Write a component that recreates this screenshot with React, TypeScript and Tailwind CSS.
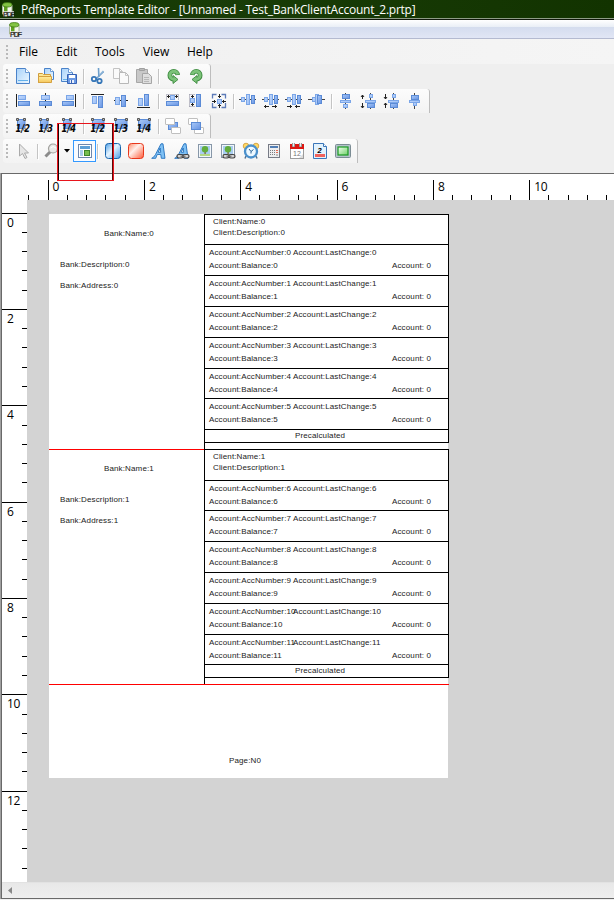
import React from "react";

const BLUE = "#5b8bd6";

function Icon({ children, x = "" }: { children: React.ReactNode; x?: string }) {
  return (
    <svg width="16" height="16" viewBox="0 0 16 16" className={"block shrink-0 overflow-visible " + x}>
      {children}
    </svg>
  );
}

function Box({ x, y, w, h, dark = false }: { x: number; y: number; w: number; h: number; dark?: boolean }) {
  return <rect x={x + 0.5} y={y + 0.5} width={w - 1} height={h - 1} fill={dark ? "url(#mid)" : "url(#pale)"} stroke={dark ? BLUE : "#7ba6e8"} />;
}

function Line({ d, c = "#222", w = 1 }: { d: string; c?: string; w?: number }) {
  return <path d={d} stroke={c} strokeWidth={w} fill="none" />;
}

function Defs() {
  return (
    <svg width="0" height="0" className="absolute">
      <defs>
        <linearGradient id="pale" x2="1" y2="1"><stop stopColor="#c3dafc" /><stop offset="1" stopColor="#9abdf5" /></linearGradient>
        <linearGradient id="mid" x2="1" y2="1"><stop stopColor="#a9c9f8" /><stop offset="1" stopColor="#6592e2" /></linearGradient>
        <linearGradient id="sheet" x2="1" y2="1"><stop stopColor="#a8d2fa" /><stop offset="1" stopColor="#eef8ff" /></linearGradient>
        <linearGradient id="blueBall" x2="1" y2="1"><stop stopColor="#4d9fe6" /><stop offset=".45" stopColor="#e6f4ff" /><stop offset="1" stopColor="#4a9ce8" /></linearGradient>
        <linearGradient id="redBall" x2="1" y2="1"><stop stopColor="#ff8a68" /><stop offset=".4" stopColor="#fff0ea" /><stop offset="1" stopColor="#ff5a38" /></linearGradient>
        <linearGradient id="greenBox" x2="1" y2="1"><stop stopColor="#f2fff0" /><stop offset="1" stopColor="#6fd068" /></linearGradient>
        <linearGradient id="folder" y2="1" x2="0"><stop stopColor="#ffefa0" /><stop offset="1" stopColor="#f5c65c" /></linearGradient>
      </defs>
    </svg>
  );
}

function Grip() {
  return (
    <div className="ml-[3px] mr-[7px] flex w-[2px] shrink-0 flex-col gap-[2px]">
      <i className="h-[2px] bg-[#b9b9b9]" />
      <i className="h-[2px] bg-[#b9b9b9]" />
      <i className="h-[2px] bg-[#b9b9b9]" />
      <i className="h-[2px] bg-[#b9b9b9]" />
    </div>
  );
}

function Sep() {
  return <i className="-mx-px h-[15px] w-px shrink-0 bg-[#c4c4c4] shadow-[1px_1px_0_#fff]" />;
}

function Bar({ w, children }: { w: string; children: React.ReactNode }) {
  return (
    <div className={"ml-[3px] flex h-[24px] items-center gap-[7px] rounded-l-[3px] rounded-tr-[3px] border-r border-[#bdbdbd] bg-linear-to-b from-[#fcfcfc] to-[#f3f3f3] " + w}>
      {children}
    </div>
  );
}

function PdfIcon({ cls }: { cls: string }) {
  return (
    <svg width="16" height="16" viewBox="0 0 16 16" className={"block shrink-0 " + cls}>
      <path d="M1.500 3v9q4.500 3 9.500 0V3z" fill="#f4f8ee" stroke="#a8b89a" />
      <path d="M3 3.500v7h3.500V4z" fill="#5fa01f" />
      <ellipse cx="6.300" cy="2.800" rx="4.700" ry="2.200" fill="#83c443" stroke="#3f7b12" strokeWidth=".8" />
      <rect x="2" y="9" width="11" height="5.500" fill="#e8e8e8" opacity=".75" />
      <text x="2" y="14.500" fontSize="7" fontFamily="Liberation Sans, sans-serif" textLength="12" fill="#111" stroke="#111" strokeWidth=".2">PDF</text>
    </svg>
  );
}

function Sheet() {
  return (
    <Icon>
      <path d="M1.500 .5h9l4 4v11h-13z" fill="url(#sheet)" stroke="#4a82c9" />
      <path d="M10.500 .5v4h4" fill="#fff" stroke="#6b9bd6" />
      <Line d="M3 12.500h10" c="#64b1ea" />
    </Icon>
  );
}
function Open() {
  return (
    <Icon>
      <path d="M6.500 .5h6l3 3v8h-9z" fill="url(#sheet)" stroke="#4a82c9" />
      <path d="M12.500 .5v3h3" fill="#fff" stroke="#6b9bd6" />
      <path d="M.5 14.500v-9h4l1 1h7v8z" fill="url(#folder)" stroke="#cf9c3c" />
      <path d="M.5 14.500v-6h13v6z" fill="url(#folder)" stroke="#d5a140" />
    </Icon>
  );
}
function Save() {
  return (
    <Icon>
      <path d="M.5 .5h7l4 4v9H.5z" fill="url(#sheet)" stroke="#4a82c9" />
      <path d="M7.500 .5v4h4" fill="#fff" stroke="#6b9bd6" />
      <Line d="M2 11.500h5" c="#64b1ea" />
      <path d="M6.500 6.500h9v9h-9z" fill="#6c9ae4" stroke="#3763b5" />
      <path d="M8 7h6v3H8z" fill="#fff" />
      <path d="M9 12h4v3H9z" fill="#e7eefb" />
      <path d="M10 12h1v3h-1z" fill="#3763b5" />
    </Icon>
  );
}
function Cut() {
  return (
    <Icon>
      <path d="M8.500 0L9 9M13.500 3L6 11" stroke="#8fb6d8" strokeWidth="1.800" />
      <path d="M8.500 0l0 8M14 4l-7 6" stroke="#5f93c5" strokeWidth=".7" />
      <circle cx="4" cy="11" r="2.200" fill="none" stroke="#3777b8" strokeWidth="1.800" />
      <circle cx="9.500" cy="13" r="2.200" fill="none" stroke="#3777b8" strokeWidth="1.800" />
    </Icon>
  );
}
function Copy() {
  return (
    <Icon>
      <path d="M.5 .5h6l3 3v7h-9z" fill="#fafafa" stroke="#c4c4c4" />
      <path d="M6.500 .5v3h3" fill="none" stroke="#c4c4c4" />
      <path d="M6.500 4.500h6l3 3v8h-9z" fill="#fafafa" stroke="#b8b8b8" />
      <path d="M12.500 4.500v3h3" fill="none" stroke="#c4c4c4" />
    </Icon>
  );
}
function Paste() {
  return (
    <Icon>
      <path d="M.5 1.500h11v13H.5z" fill="#c8c8c8" stroke="#a7a7a7" />
      <path d="M3.500 .5h5v2h-5z" fill="#bbb" stroke="#a0a0a0" />
      <path d="M6.500 5.500h6l3 3v7h-9z" fill="#dedede" stroke="#a6a6a6" />
      <path d="M8 9.500h5M8 11.500h5M8 13.500h5" stroke="#b8b8b8" />
    </Icon>
  );
}
function Turn({ flip = false }: { flip?: boolean }) {
  return (
    <Icon>
      <g transform={flip ? "translate(16 0) scale(-1 1)" : "translate(1 0)"}>
        <path d="M11.800 7A4 4 0 1 0 7.500 11.300" fill="none" stroke="#3c8a3e" strokeWidth="4.600" />
        <path d="M7 7.500L12 11.500 7 15.500z" fill="#7cc279" stroke="#3c8a3e" strokeWidth=".9" />
        <path d="M11.800 6.300A4 4 0 1 0 8 11.200" fill="none" stroke="#7cc279" strokeWidth="3" />
      </g>
    </Icon>
  );
}

function AlignL() {
  return <Icon><Box x={3} y={2} w={8} h={5} /><Box x={3} y={8} w={12} h={5} dark /><Line d="M1.500 1v13" /></Icon>;
}
function AlignC() {
  return <Icon><Line d="M7.500 0v15" /><Box x={3} y={2} w={9} h={5} /><Box x={1} y={8} w={13} h={5} dark /></Icon>;
}
function AlignR() {
  return <Icon><Box x={5} y={2} w={8} h={5} /><Box x={1} y={8} w={12} h={5} dark /><Line d="M14.500 1v13" /></Icon>;
}
function AlignT() {
  return <Icon><Box x={2} y={3} w={5} h={8} /><Box x={8} y={3} w={5} h={12} dark /><Line d="M1 1.500h13" /></Icon>;
}
function AlignM() {
  return <Icon><Line d="M1 7.500h14" /><Box x={2} y={4} w={5} h={8} /><Box x={8} y={2} w={5} h={12} dark /></Icon>;
}
function AlignB() {
  return <Icon><Box x={2} y={5} w={5} h={8} /><Box x={8} y={1} w={5} h={12} dark /><Line d="M1 14.500h13" /></Icon>;
}
function SizeW() {
  return <Icon><Box x={5} y={2} w={5} h={5} /><Box x={1} y={8} w={13} h={5} dark /><Line d="M2 3.500h3M10 3.500h3M3.500 2v3M11.500 2v3" /><Line d="M1.500 1v6M13.500 1v6M2 1.500h11" c="#99a" w={0.6} /></Icon>;
}
function SizeH() {
  return <Icon><Box x={2} y={5} w={5} h={5} /><Box x={8} y={1} w={5} h={13} dark /><Line d="M4.500 2v3M4.500 10v3M3 3.500h3M3 11.500h3" /><Line d="M1 1.500h6M1 13.500h6M1.500 1v13" c="#99a" w={0.6} /></Icon>;
}
function SizeB() {
  return (
    <Icon>
      <path d="M1.500 5.500v-4h4M10.500 1.500h4v4M14.500 10v4.500h-4M5.500 14.500h-4V10" fill="none" stroke="#5d7bb8" strokeWidth="1.300" />
      <Box x={6} y={6} w={5} h={5} />
      <Line d="M8.500 1v4M8.500 11v4M1 8.500h4M11 8.500h4M7 3.500h3M7 12.500h3M3.500 7v3M12.500 7v3" />
    </Icon>
  );
}
function Spread({ kind }: { kind: number }) {
  return (
    <Icon>
      <Line d="M-1 6.500h17" c="#444" />
      {kind === 3 ? <Box x={3} y={4} w={5} h={5} /> : <Box x={1} y={4} w={4} h={5} />}
      <Box x={6} y={1} w={4} h={11} />
      <Box x={kind === 3 ? 8 : 11} y={2} w={kind === 3 ? 5 : 4} h={9} dark />
      {kind === 1 && <Line d="M1 13.500h5M9 13.500h5M3 12l-1.500 1.500L3 15M12 12l1.500 1.500L12 15" />}
      {kind === 2 && <Line d="M1 13.500h5M9 13.500h5M4 12l1.500 1.500L4 15M11 12l-1.500 1.500L11 15" />}
    </Icon>
  );
}
function SpreadV({ kind }: { kind: number }) {
  const s = kind === 1 || kind === 2 ? 2 : 0;
  return (
    <Icon>
      <Line d={`M${7.5 + s} 0v16`} c="#444" />
      {kind === 0 && <Box x={4} y={1} w={8} h={5} dark />}
      {s > 0 && <Box x={8} y={1} w={4} h={4} />}
      {kind === 3 && <Box x={6} y={8} w={4} h={5} />}
      <Box x={2 + s} y={7} w={11} h={3} />
      {kind === 0 && <Box x={5} y={11} w={5} h={4} />}
      {s > 0 && <Box x={6} y={10} w={8} h={5} dark />}
      {kind === 3 && <Box x={4} y={2} w={8} h={5} dark />}
      {kind === 1 && <Line d="M1.500 2v4M1.500 10v5M0 4l1.500-2L3 4M0 13l1.500 2L3 13" />}
      {kind === 2 && <Line d="M1.500 1v5M1.500 10v5M0 4l1.500 2L3 4M0 12l1.500-2L3 12" />}
    </Icon>
  );
}

function Fraction({ n, wide = false }: { n: string; wide?: boolean }) {
  const r = wide ? 12.5 : 8.5;
  return (
    <Icon>
      <rect x="2.500" y="1.500" width={r - 1} height="9" fill="url(#mid)" stroke={BLUE} />
      <path d={`M1.500 .5h2v2h-2zM${r} .5h2v2h-2z`} fill="#bbb" stroke="#555" />
      {!wide && <path d="M8.500 10.500h2v2h-2z" fill="#ddd" stroke="#999" />}
      <text x="0.500" y="14" fontSize="10" fontWeight="700" fontStyle="italic" fontFamily="DejaVu Sans, sans-serif" textLength="14.500" lengthAdjust="spacingAndGlyphs" fill="#050505">{n}</text>
    </Icon>
  );
}
function Layers({ front = false }: { front?: boolean }) {
  const white = (
    <>
      <rect x=".5" y=".5" width="9" height="6" rx=".5" fill="#fff" stroke="#bfbfbf" />
      <rect x="6.500" y="9.500" width="9" height="6" rx=".5" fill="#fff" stroke="#bfbfbf" />
    </>
  );
  return <Icon>{front && white}<Box x={3} y={4} w={10} h={8} dark />{!front && white}</Icon>;
}

function Picture({ link = false }: { link?: boolean }) {
  return (
    <Icon>
      <rect x="1.500" y="1.500" width="13" height="13" fill="#f2f7fb" stroke="#8797a8" />
      <rect x="3" y="3" width="10" height="10" fill="#a9cdf0" />
      <path d="M7.500 8h1.200v4H7.500z" fill="#7b572b" />
      <circle cx="8" cy="6.300" r="3.200" fill="#62ad3c" />
      <path d="M3 11h10v2H3z" fill="#b3d884" />
      {link && <Chain />}
    </Icon>
  );
}
function Chain() {
  return (
    <g fill="#d4d4d4" stroke="#444" strokeWidth="1.200">
      <rect x="3" y="11.500" width="6" height="3.500" rx="1.700" />
      <rect x="9" y="11.500" width="6" height="3.500" rx="1.700" />
      <path d="M6.500 13.200h5" stroke="#666" />
    </g>
  );
}
function LetterA({ link = false }: { link?: boolean }) {
  return (
    <Icon>
      <path d="M.7 15.300Q3 14.500 4.500 11.500L10 .8H12L14 15.300H10.300L9.800 11.500H6.200L4.700 15.300zM7.200 9.300h2.500L9.200 5z" fill="#7fc1f5" stroke="#2470bd" strokeWidth=".9" fillRule="evenodd" />
      {link && <Chain />}
    </Icon>
  );
}
function Ball({ red = false }: { red?: boolean }) {
  return <Icon><rect x=".5" y=".5" width="15" height="15" rx="3" fill={red ? "url(#redBall)" : "url(#blueBall)"} stroke={red ? "#e8371b" : "#1763ad"} /></Icon>;
}
function Pointer() {
  return <Icon x="-ml-[2px]"><path d="M4.500 1v12l3-2.500L10 15.500l2-1-2.500-4.500h4z" fill="#e6e6e6" stroke="#aaa" /></Icon>;
}
function Magnifier() {
  return <Icon x="-mr-[3px]"><path d="M7 8L1.500 13.500" stroke="#8b8b8b" strokeWidth="3" /><circle cx="9" cy="5.500" r="4.500" fill="#e9e9e7" stroke="#a1a19e" strokeWidth="1.200" /><path d="M6.500 5Q9 2 12 5" stroke="#fff" fill="none" /></Icon>;
}
function Layout() {
  return (
    <Icon>
      <rect x="1.500" y="1.500" width="13" height="13" fill="#fff" stroke="#6d86ad" />
      <rect x="3" y="3" width="10" height="3" fill="#5e9fd6" />
      <rect x="3" y="7" width="3" height="6" fill="#a9cdec" />
      <rect x="7.500" y="7.500" width="5" height="5" fill="#76be4e" stroke="#3c862b" />
    </Icon>
  );
}
function Clock() {
  return (
    <Icon>
      <circle cx="3" cy="3" r="2.800" fill="#ffd967" stroke="#c78c22" strokeWidth=".7" />
      <circle cx="13" cy="3" r="2.800" fill="#ffd967" stroke="#c78c22" strokeWidth=".7" />
      <path d="M3 13l-1 2.500M13 13l1 2.500" stroke="#55718e" strokeWidth="1.500" />
      <circle cx="8" cy="8.500" r="6" fill="#edf8ff" stroke="#4a90cc" strokeWidth="2.300" />
      <path d="M6 6L8 8.500l2.500-2M8 8.500v2" fill="none" stroke="#245f94" />
    </Icon>
  );
}
function Calc() {
  return (
    <Icon>
      <rect x="2.500" y="1.500" width="11" height="13" fill="#eeeeef" stroke="#777b86" />
      <rect x="4" y="3" width="8" height="2" fill="#517eb5" />
      <path d="M4 7.500h5M4 9.500h5M4 11.500h5" stroke="#7a7d82" strokeDasharray="1 1" />
      <path d="M10 7.500h2M10 9.500h2" stroke="#e76b50" />
      <path d="M10 12h2" stroke="#888" />
    </Icon>
  );
}
function Calendar() {
  return (
    <Icon>
      <rect x="1.500" y="2.500" width="13" height="13" fill="#fff" stroke="#9c9c9c" />
      <rect x="1" y="1" width="14" height="5" fill="#dc1712" />
      <path d="M4.500 0v4M11.500 0v4" stroke="#888" strokeWidth="3" />
      <path d="M4.500 0v3.500M11.500 0v3.500" stroke="#eee" strokeWidth="1.400" />
      <text x="4" y="13" fontSize="7" fontFamily="Liberation Sans, sans-serif" fill="#777">12</text>
      <path d="M10 15l4-4v4z" fill="#ddd" />
    </Icon>
  );
}
function PageNo() {
  return (
    <Icon>
      <path d="M1.500 .5h10l3 3v12h-13z" fill="#e2f2fd" stroke="#3b76b9" />
      <path d="M11.500 .5v3h3" fill="#fff" stroke="#3b76b9" />
      <path d="M3 11h10v3H3z" fill="#ef625d" />
      <text x="5.500" y="10" fontSize="7.500" fontFamily="Liberation Sans, sans-serif" fontWeight="700" fontStyle="italic">2</text>
    </Icon>
  );
}
function Panel() {
  return <Icon><rect x=".5" y="1.500" width="15" height="13" rx="1" fill="#b4c3cb" stroke="#7b8c94" /><rect x="3" y="4" width="10" height="8" fill="url(#greenBox)" stroke="#1a9a22" strokeWidth="1.200" /></Icon>;
}

type Row = { id: number; h: string };

function Account({ id, h }: Row) {
  return (
    <div className={"border-t border-black pl-[4px] pt-px leading-[13px] " + h}>
      <div className="flex h-[13px]">
        <span className="w-[84px]">Account:AccNumber:{id}</span>
        <span>Account:LastChange:{id}</span>
      </div>
      <div className="flex h-[13px]">
        <span className="w-[183px]">Account:Balance:{id}</span>
        <span>Account: 0</span>
      </div>
    </div>
  );
}

function Bank({ id, head, rows }: { id: number; head: string; rows: Row[] }) {
  return (
    <section className="flex h-[235px]">
      <div className={"w-[155px] shrink-0 border-t leading-[13px] " + (id ? "border-[#ff0000]" : "border-transparent")}>
        <div className="pl-[55px] pt-[12px]">Bank:Name:{id}</div>
        <div className="pl-[11px] pt-[18px]">Bank:Description:{id}</div>
        <div className="pl-[11px] pt-[8px]">Bank:Address:{id}</div>
      </div>
      <div className="w-[245px] shrink-0 border-l border-black">
        <div className="border-b border-r border-black">
          <div className={"border-t border-black pl-[8px] pt-px leading-[11px] " + head}>
            <div>Client:Name:{id}</div>
            <div>Client:Description:{id}</div>
          </div>
          {rows.map((r) => <Account key={r.id} {...r} />)}
          <div className="h-[13px] border-t border-black pl-[90px] leading-[11px]">Precalculated</div>
        </div>
      </div>
    </section>
  );
}

const firstRows: Row[] = [
  { id: 0, h: "h-[31px]" }, { id: 1, h: "h-[31px]" }, { id: 2, h: "h-[31px]" },
  { id: 3, h: "h-[31px]" }, { id: 4, h: "h-[30px]" }, { id: 5, h: "h-[31px]" },
];
const secondRows: Row[] = [
  { id: 6, h: "h-[30px]" }, { id: 7, h: "h-[31px]" }, { id: 8, h: "h-[31px]" },
  { id: 9, h: "h-[31px]" }, { id: 10, h: "h-[31px]" }, { id: 11, h: "h-[30px]" },
];

function TopRuler() {
  return (
    <div className="flex h-[26px] items-end overflow-hidden bg-white pl-[26.3px]">
      {Array.from({ length: 31 }, (_, i) => {
        const major = i % 5 === 1;
        return (
          <div key={i} className={"w-[19.28px] shrink-0 whitespace-nowrap border-l border-black pl-[4px] text-[12px] leading-[13px] tracking-[-0.3px] " + (major ? "h-[20px]" : "h-[5px]")}>
            {major ? ((i - 1) / 5) * 2 : ""}
          </div>
        );
      })}
    </div>
  );
}
function SideRuler() {
  return (
    <div className="flex w-[25px] shrink-0 flex-col items-end overflow-hidden bg-white pt-[12.600px]">
      {Array.from({ length: 35 }, (_, i) => (
        <div key={i} className={"h-[19.28px] shrink-0 border-t border-black pl-[5px] text-[12px] leading-[18px] tracking-[-0.3px] " + (i % 5 === 0 ? "w-[25px]" : "w-[5px]")}>
          {i % 5 === 0 ? (i / 5) * 2 : ""}
        </div>
      ))}
    </div>
  );
}

export default function App() {
  return (
    <div className="relative flex h-[900px] w-[614px] flex-col overflow-hidden bg-[#efefef] font-['Open_Sans','Noto_Sans',sans-serif] text-black">
      <Defs />
      <header className="flex h-[18px] shrink-0 items-center bg-linear-to-r from-[#123300] via-[#193d08] via-35% to-[#123300] text-[12px] text-white">
        <PdfIcon cls="ml-[1px] mt-[2px]" />
        <span className="ml-[4px] mt-[2px] whitespace-nowrap tracking-[-0.235px]">PdfReports Template Editor - [Unnamed - Test_BankClientAccount_2.prtp]</span>
      </header>
      <div className="h-px shrink-0 bg-[#8f9c87]" />
      <div className="h-px shrink-0 bg-[#10180c]" />
      <div className="flex h-[19px] shrink-0 border-b border-[#b4bad0] bg-[linear-gradient(#fff_0,#e9eef6_7px,#d4dcee_7px,#e1e6f5_18px)]">
        <PdfIcon cls="ml-[8px] mt-[2px]" />
      </div>
      <nav className="flex h-[25px] shrink-0 items-center bg-linear-to-r from-[#f0f0f0] to-[#f5f5f5] pl-[3px] text-[12px]">
        <Grip />
        <span className="ml-[4px] w-[37px]">File</span>
        <span className="w-[39px]">Edit</span>
        <span className="w-[48px]">Tools</span>
        <span className="w-[44px]">View</span>
        <span>Help</span>
      </nav>
      <div className="flex h-[109px] shrink-0 flex-col gap-px">
        <Bar w="w-[208px]">
          <Grip /><span className="-ml-[14px]" /><Sheet /><Open /><Save /><Sep /><Cut /><Copy /><Paste /><Sep /><Turn /><Turn flip />
        </Bar>
        <Bar w="w-[427px]">
          <Grip /><span className="-ml-[14px]" /><AlignL /><AlignC /><AlignR /><Sep /><AlignT /><AlignM /><AlignB /><Sep /><SizeW /><SizeH /><SizeB /><Sep />
          <Spread kind={0} /><Spread kind={1} /><Spread kind={2} /><Spread kind={3} /><Sep />
          <SpreadV kind={0} /><SpreadV kind={1} /><SpreadV kind={2} /><SpreadV kind={3} />
        </Bar>
        <Bar w="w-[208px]">
          <Grip /><span className="-ml-[14px]" /><Fraction n="1/2" /><Fraction n="1/3" /><Fraction n="1/4" /><Sep />
          <Fraction n="1/2" wide /><Fraction n="1/3" wide /><Fraction n="1/4" wide /><Sep /><Layers /><Layers front />
        </Bar>
        <Bar w="w-[355px]">
          <Grip /><span className="-ml-[14px]" /><span className="-mr-[7px] w-[2px] shrink-0" /><Pointer /><Sep /><Magnifier />
          <svg width="6" height="4" className="-mr-[3px] shrink-0"><path d="M0 0h6L3 3.500z" /></svg>
          <span className="-ml-[1px] -mr-[5px] flex h-[22px] w-[23px] shrink-0 items-center justify-center border border-[#3399ff] bg-[#f8fbff]"><Layout /></span>
          <Sep /><span className="-mr-[6px] w-0 shrink-0" /><Ball /><Ball red /><LetterA /><LetterA link /><Picture /><Picture link /><Clock /><Calc /><Calendar /><PageNo /><Panel />
        </Bar>
      </div>
      <main className="flex h-[726px] shrink-0 flex-col border-l border-[#a0a0a0]">
        <div className="flex h-[725px] flex-col border-l border-t border-[#696969]">
          <TopRuler />
          <div className="flex h-[682px] bg-[#d3d3d3]">
            <SideRuler />
            <div className="ml-[22px] mt-[14px] h-[564px] w-[400px] font-['Liberation_Sans',Arial,sans-serif] text-[8px] tracking-[0.13px] text-[#222]">
              <div className="h-[564px] w-[399px] whitespace-nowrap bg-white">
                <Bank id={0} head="h-[30px]" rows={firstRows} />
                <Bank id={1} head="h-[31px]" rows={secondRows} />
                <div className="h-0 w-[400px] border-t border-[#ff0000]" />
                <div className="pl-[180px] pt-[70px] leading-[12px]">Page:N0</div>
              </div>
            </div>
          </div>
          <div className="flex h-[16px] items-center border-t border-[#e2e2e2] bg-linear-to-b from-[#e8e8e8] to-[#eee] pl-[6px]">
            <svg width="4" height="7"><path d="M4 0v7L0 3.500z" fill="#888" /></svg>
          </div>
        </div>
        <div className="h-px bg-[#696969]" />
      </main>
      <div className="pointer-events-none absolute left-[57px] top-[123px] h-[58px] w-[57px] border border-[#e8141c]">
        <div className="h-full w-full border-x border-l-[#200] border-r-[#5a0808]" />
      </div>
    </div>
  );
}
